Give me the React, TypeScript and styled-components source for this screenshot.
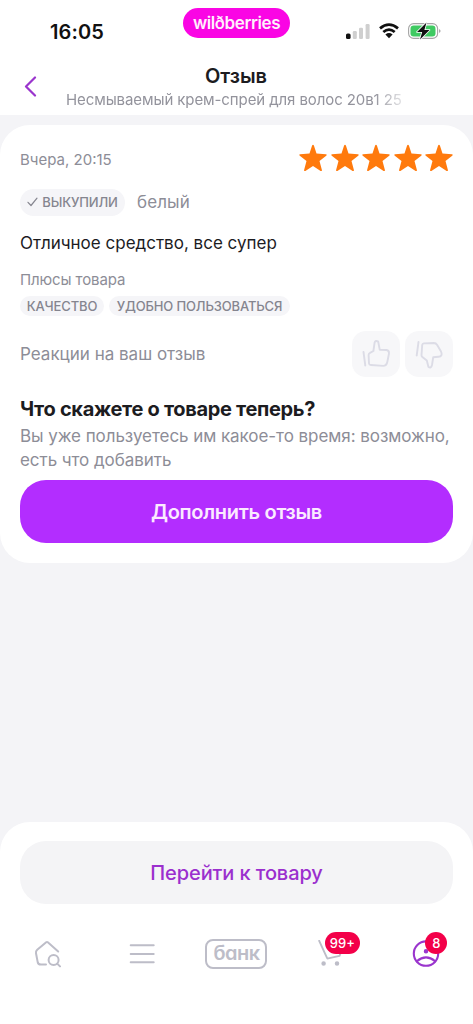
import React from "react";
import styled, { createGlobalStyle } from "styled-components";

const GlobalStyle = createGlobalStyle`
  *, *::before, *::after { box-sizing: border-box; }
  body { margin: 0; background: #f4f4f7; font-family: Inter, Roboto, sans-serif; }
  button { font-family: inherit; border: 0; padding: 0; cursor: pointer; }
  svg { display: block; flex: none; }
`;

const Screen = styled.div`
  width: 473px;
  height: 1024px;
  display: flex;
  flex-direction: column;
  background: #f4f4f7;
  overflow: hidden;
`;

const Header = styled.header`
  height: 115px;
  background: #fff;
  flex: none;
`;

const StatusBar = styled.div`
  height: 62px;
  display: grid;
  grid-template-columns: 183px 107px 183px;
`;

const Clock = styled.div`
  padding: 20px 0 0 50px;
  font-size: 20px;
  line-height: 24px;
  font-weight: 600;
  letter-spacing: 0.1px;
  color: #111;
`;

const BrandPill = styled.div`
  margin-top: 8px;
  height: 30px;
  border-radius: 15px;
  background: #fa05e4;
  color: #fff0fc;
  font-size: 17px;
  line-height: 30px;
  font-weight: 600;
  letter-spacing: -0.4px;
  text-align: center;
  white-space: nowrap;
`;

const StatusIcons = styled.div`
  display: flex;
  align-items: center;
  height: 20px;
  margin-top: 21px;
  padding-left: 56px;
  gap: 9px;
`;

const TitleBar = styled.div`
  display: grid;
  grid-template-columns: 66px 340px 67px;
  height: 53px;
`;

const BackButton = styled.button`
  background: none;
  padding: 14px 0 0 24px;
  display: flex;
  align-items: flex-start;
`;

const Titles = styled.div`
  min-width: 0;
`;

const Title = styled.h1`
  margin: 2px 0 0;
  font-size: 20px;
  line-height: 24px;
  font-weight: 600;
  text-align: center;
  color: #1c1c1f;
`;

const Subtitle = styled.div`
  font-size: 15px;
  line-height: 24px;
  letter-spacing: -0.09px;
  white-space: nowrap;
  color: #93939c;
  mask-image: linear-gradient(to right, #000 308px, transparent 346px);
`;

const Card = styled.section`
  margin-top: 10px;
  height: 437.5px;
  flex: none;
  padding: 19px 20px;
  border-radius: 30px;
  background: #fff;
`;

const Row = styled.div<{ $h: number; $gap?: number; $between?: boolean; $top?: number }>`
  display: flex;
  align-items: center;
  height: ${(p) => p.$h}px;
  gap: ${(p) => p.$gap ?? 0}px;
  margin-top: ${(p) => p.$top ?? 0}px;
  justify-content: ${(p) => (p.$between ? "space-between" : "flex-start")};
`;

const Text = styled.span<{ $size: number; $track?: number; $dark?: boolean }>`
  font-size: ${(p) => p.$size}px;
  letter-spacing: ${(p) => p.$track ?? 0}px;
  color: ${(p) => (p.$dark ? "#1c1c1f" : "#8d8d97")};
  white-space: nowrap;
`;

const Stars = styled.div`
  display: flex;
  gap: 3.5px;
  margin-top: -2px;
`;

const Chip = styled.span<{ $w: number; $h: number }>`
  display: inline-flex;
  align-items: center;
  justify-content: center;
  gap: 4px;
  width: ${(p) => p.$w}px;
  height: ${(p) => p.$h}px;
  border-radius: ${(p) => p.$h / 2}px;
  background: #f5f5f8;
  color: #85858f;
  font-size: 13px;
  font-weight: 500;
  letter-spacing: -0.15px;
  white-space: nowrap;
`;

const Reactions = styled.div`
  display: flex;
  gap: 5.5px;
`;

const ReactionButton = styled.button`
  width: 48px;
  height: 46px;
  border-radius: 14px;
  background: #f7f7f9;
  display: flex;
  align-items: center;
  justify-content: center;
`;

const Question = styled.h2`
  margin: 19px 0 0;
  font-size: 20px;
  line-height: 26px;
  font-weight: 700;
  letter-spacing: -0.32px;
  color: #1c1c1f;
`;

const Hint = styled.p`
  margin: 2px 0 0;
  font-size: 17px;
  line-height: 24px;
  letter-spacing: -0.06px;
  color: #8d8d97;
  white-space: nowrap;
`;

const WideButton = styled.button<{ $primary?: boolean }>`
  display: block;
  width: 100%;
  height: 63px;
  border-radius: 26px;
  font-size: 20px;
  letter-spacing: ${(p) => (p.$primary ? -0.3 : -0.1)}px;
  font-weight: ${(p) => (p.$primary ? 600 : 500)};
  background: ${(p) => (p.$primary ? "#b32dff" : "#f4f4f6")};
  color: ${(p) => (p.$primary ? "#fbeaff" : "#9b2fce")};
  margin-top: ${(p) => (p.$primary ? 8 : 0)}px;
`;

const BottomPanel = styled.footer`
  margin-top: auto;
  height: 202.5px;
  padding: 19.5px 20px 0;
  border-radius: 30px 30px 0 0;
  background: #fff;
`;

const TabBar = styled.nav`
  height: 60px;
  margin: 20px -20px 0;
  display: grid;
  grid-template-columns: repeat(5, 1fr);
`;

const Tab = styled.div`
  position: relative;
  display: flex;
  align-items: center;
  justify-content: center;
`;

const BankLogo = styled.div`
  width: 62px;
  height: 30px;
  border: 2px solid #bdbdc8;
  border-radius: 8px;
  color: #bdbdc8;
  font-size: 20px;
  line-height: 25px;
  font-weight: 600;
  letter-spacing: -0.5px;
  font-feature-settings: "cv11";
  text-align: center;
`;

const Badge = styled.span<{ $left: number; $w: number }>`
  position: absolute;
  top: 8px;
  left: ${(p) => p.$left}px;
  width: ${(p) => p.$w}px;
  height: 22px;
  border-radius: 11px;
  background: #f30049;
  color: #fff;
  font-size: 13px;
  line-height: 22px;
  font-weight: 500;
  text-align: center;
`;

const Star = () => (
  <svg width="28" height="28" viewBox="0 0 28 28">
    <path
      d="M14.9 1.6 17.5 9.6 26.9 10.2Q28.4 10.5 27.2 11.7L20.5 17 22.9 26Q23 27.6 21.6 26.9L14 22 6.4 26.9Q5 27.6 5.1 26L7.5 17 .8 11.7Q-.4 10.5 1.1 10.2L10.5 9.6 13.1 1.6Q14 .1 14.9 1.6Z"
      fill="#ff7a0d"
    />
  </svg>
);

const Signal = () => (
  <svg width="24" height="16" viewBox="0 0 24 16">
    <rect x="0" y="10.5" width="4.6" height="5.5" rx="1.6" fill="#111" />
    <rect x="6.8" y="8" width="4" height="8" rx="1.2" fill="#cfcfcf" />
    <rect x="13" y="4.7" width="4" height="11.3" rx="1.2" fill="#cfcfcf" />
    <rect x="19.6" y="1" width="4" height="15" rx="1.2" fill="#cfcfcf" />
  </svg>
);

const Wifi = () => (
  <svg width="20" height="16" viewBox="0 0 20 16">
    <g fill="none" stroke="#111" strokeWidth="2.8">
      <path d="M1 5.3Q10-2 19 5.3" />
      <path d="M4.3 9Q10 4.3 15.7 9" />
    </g>
    <path d="M6.4 11.4Q10 8.7 13.6 11.4L10 15.3Z" fill="#111" />
  </svg>
);

const Battery = () => (
  <svg width="34" height="18" viewBox="0 0 34 18">
    <rect x=".6" y="1.6" width="29" height="14.8" rx="5" fill="#fff" stroke="#a5a5a5" strokeWidth="1.1" />
    <rect x="2.5" y="3.5" width="25" height="11" rx="3.2" fill="#3fca62" />
    <path d="M31.2 7Q33.8 9 31.2 11Z" fill="#999" />
    <path d="M18.5.5 9 10h5.2L12 17.5 21.5 8H16.4Z" fill="#111" stroke="#fff" strokeWidth="1.6" paintOrder="stroke" strokeLinejoin="round" />
  </svg>
);

const Thumb = ({ down }: { down?: boolean }) => (
  <svg width="30" height="30" viewBox="0 0 30 30" fill="none" stroke="#dcdce6" strokeWidth="1.9" strokeLinecap="round" strokeLinejoin="round">
    {down ? (
      <path d="M4.5 3 2.7 16.5M7.5 16.2 8.2 6Q8.4 4.5 9.8 4.4L19.8 4Q22 4 23.2 6L27 12.5Q29 17.3 24.5 17.8L19.2 18.3 18 26Q17 30 14.4 27.8L12.8 21.5 8.7 18.3Q7.5 17.5 7.5 16.2Z" />
    ) : (
      <path d="M2.5 13 4.3 26.5M8 24.5 7.6 16Q7.6 14.5 9 13.9L12.4 12 13.6 3.6Q14.5.9 17.2 2.6L18.7 10.7 25.5 11Q28.3 11.6 28 14.5L26.3 23Q25.5 26.8 22.2 26.9L10 26Q8.1 25.9 8 24.5Z" />
    )}
  </svg>
);

const HomeSearch = () => (
  <svg width="28" height="28" viewBox="0 0 28 28" fill="none" stroke="#bdbdc8" strokeWidth="2" strokeLinecap="round" strokeLinejoin="round">
    <path d="M13 24.6H8Q4.9 24.6 4.6 21.6L3 13.3Q2.6 11.2 4.2 9.8L13.2 2.3Q14 1.7 14.8 2.3L25.2 11.5" />
    <circle cx="20.6" cy="20" r="5" />
    <path d="M24.2 23.6 27 26.4" />
  </svg>
);

const Menu = () => (
  <svg width="26" height="22" viewBox="0 0 26 22" stroke="#bdbdc8" strokeWidth="2" strokeLinecap="round">
    <path d="M1.7 2.3h23M1.7 10.9h23M1.7 19.3h23" />
  </svg>
);

const Cart = () => (
  <svg width="28" height="28" viewBox="0 0 28 28" fill="none" stroke="#bdbdc8" strokeWidth="1.9" strokeLinecap="round" strokeLinejoin="round">
    <path d="M2.2.8 10 17.8Q10.4 18.6 11.3 18.4L22.5 15.9 26 7" />
    <circle cx="6.6" cy="23.6" r="1.3" fill="#bdbdc8" />
    <circle cx="20" cy="23.6" r="1.3" fill="#bdbdc8" />
  </svg>
);

const Face = () => (
  <svg width="28" height="28" viewBox="0 0 28 28" fill="none" stroke="#9a35cd" strokeWidth="2.1" strokeLinecap="round">
    <circle cx="14" cy="13.6" r="12.2" />
    <path d="M4.8 21.3Q14 13.6 23.2 21.3" />
    <circle cx="14" cy="11.2" r="1.2" fill="#9a35cd" />
  </svg>
);

export default function App() {
  return (
    <Screen>
      <GlobalStyle />
      <Header>
        <StatusBar>
          <Clock>16:05</Clock>
          <BrandPill>wilðberries</BrandPill>
          <StatusIcons>
            <Signal />
            <Wifi />
            <Battery />
          </StatusIcons>
        </StatusBar>
        <TitleBar>
          <BackButton aria-label="Назад">
            <svg width="13" height="21" viewBox="0 0 13 21" fill="none" stroke="#9a35cd" strokeWidth="2.2" strokeLinecap="round" strokeLinejoin="round">
              <path d="M11 1.5 2 10.5 11 19.5" />
            </svg>
          </BackButton>
          <Titles>
            <Title>Отзыв</Title>
            <Subtitle>Несмываемый крем-спрей для волос 20в1 25</Subtitle>
          </Titles>
        </TitleBar>
      </Header>

      <Card>
        <Row $h={30} $between>
          <Text $size={15}>Вчера, 20:15</Text>
          <Stars>
            {[0, 1, 2, 3, 4].map((i) => (
              <Star key={i} />
            ))}
          </Stars>
        </Row>
        <Row $h={28} $top={14} $gap={12}>
          <Chip $w={105} $h={27}>
            <svg width="11" height="10" viewBox="0 0 11 10" fill="none" stroke="#85858f" strokeWidth="1.2" strokeLinecap="round" strokeLinejoin="round">
              <path d="M1 5.3 4 8.5 10 1.2" />
            </svg>
            ВЫКУПИЛИ
          </Chip>
          <Text $size={17} $track={0.1}>белый</Text>
        </Row>
        <Row $h={24} $top={15}>
          <Text $size={17} $dark>Отличное средство, все супер</Text>
        </Row>
        <Row $h={20} $top={14}>
          <Text $size={15} $track={-0.12}>Плюсы товара</Text>
        </Row>
        <Row $h={20} $top={7} $gap={5}>
          <Chip $w={84} $h={20}>КАЧЕСТВО</Chip>
          <Chip $w={181} $h={20}>УДОБНО ПОЛЬЗОВАТЬСЯ</Chip>
        </Row>
        <Row $h={46} $top={15} $between>
          <Text $size={17}>Реакции на ваш отзыв</Text>
          <Reactions>
            <ReactionButton aria-label="Нравится"><Thumb /></ReactionButton>
            <ReactionButton aria-label="Не нравится"><Thumb down /></ReactionButton>
          </Reactions>
        </Row>
        <Question>Что скажете о товаре теперь?</Question>
        <Hint>
          Вы уже пользуетесь им какое-то время: возможно,
          <br />
          есть что добавить
        </Hint>
        <WideButton $primary>Дополнить отзыв</WideButton>
      </Card>

      <BottomPanel>
        <WideButton>Перейти к товару</WideButton>
        <TabBar>
          <Tab><HomeSearch /></Tab>
          <Tab><Menu /></Tab>
          <Tab><BankLogo>банк</BankLogo></Tab>
          <Tab>
            <Cart />
            <Badge $left={41} $w={35}>99+</Badge>
          </Tab>
          <Tab>
            <Face />
            <Badge $left={47} $w={22}>8</Badge>
          </Tab>
        </TabBar>
      </BottomPanel>
    </Screen>
  );
}
